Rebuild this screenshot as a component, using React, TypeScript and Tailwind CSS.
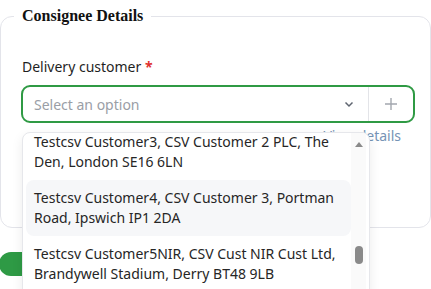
import React from "react";

const options = [
  ["Testcsv Customer3, CSV Customer 2 PLC, The", "Den, London SE16 6LN"],
  ["Testcsv Customer4, CSV Customer 3, Portman", "Road, Ipswich IP1 2DA"],
  ["Testcsv Customer5NIR, CSV Cust NIR Cust Ltd,", "Brandywell Stadium, Derry BT48 9LB"],
  ["Testcsv Customer6, CSV Customer 6 Ltd,", "High Street, Leeds LS1 1AA"],
];

export default function App() {
  return (
    <div className="relative w-[431px] h-[289px] overflow-hidden bg-white font-['Noto_Sans',sans-serif] text-[#222]">
      <fieldset className="w-[431px] h-[220px] mt-[8px] border border-[#e3e4ea] rounded-[12px] pl-[20px] pr-[15px] m-0">
        <legend className="-ml-[7px] px-[8px] font-['Liberation_Serif',serif] font-bold text-[16px] leading-[16px] text-[#111]">
          Consignee Details
        </legend>
        <div className="pt-[33px]">
          <div className="pl-[1px] text-[14px] leading-[20px] text-[#1f1f1f]">
            Delivery customer <span className="text-[#e0302e] font-bold">*</span>
          </div>
          <div className="mt-[8px] h-[38px] w-[394px] border-2 border-[#2f9a44] rounded-[9px] flex items-center">
            <div className="flex-1 pl-[11px] text-[14px] text-[#9a9ea6]">Select an option</div>
            <svg width="12" height="12" viewBox="0 0 12 12" className="mr-[13px]">
              <path d="M2.5 4.5 L6 8 L9.5 4.5" fill="none" stroke="#5f6570" strokeWidth="1.5" />
            </svg>
            <div className="w-px self-stretch bg-[#e3e4e8]" />
            <div className="w-[44px] flex items-center justify-center">
              <svg width="14" height="14" viewBox="0 0 14 14">
                <path d="M7 1 V13 M1 7 H13" stroke="#a3a7ae" strokeWidth="1.4" />
              </svg>
            </div>
          </div>
          <div className="flex justify-end pr-[14px] mt-[3px] text-[14px] leading-[20px] text-[#7693b5]">
            View details
          </div>
        </div>
      </fieldset>

      <div className="mt-[24px] -ml-[1px] w-[46px] h-[24px] rounded-full bg-[#2e9a45] flex items-center justify-end pr-[2px]">
        <div className="w-[20px] h-[20px] rounded-full bg-white" />
      </div>

      <div className="absolute left-[22px] top-[132px] w-[348px] h-[170px] bg-white border border-[#e6e7eb] rounded-[8px] shadow-[0_4px_12px_rgba(0,0,0,0.08)] flex overflow-hidden">
        <div className="flex-1 overflow-hidden">
          <div className="-mt-[9px] pl-[3px] flex flex-col">
            {options.map((o, i) => (
              <div
                key={i}
                className={
                  "px-[8px] py-[8px] rounded-[8px] text-[14px] leading-[20px] text-[#262626] " +
                  (i === 1 ? "bg-[#f6f7f9]" : "")
                }
              >
                <div>{o[0]}</div>
                <div>{o[1]}</div>
              </div>
            ))}
          </div>
        </div>
        <div className="w-[15px] mr-[3px] bg-[#fafafa] flex flex-col items-center">
          <svg width="8" height="6" viewBox="0 0 8 6" className="mt-[8px]">
            <path d="M0 6 L4 1 L8 6 Z" fill="#8a8a8a" />
          </svg>
          <div className="mt-[99px] w-[8px] h-[18px] rounded-full bg-[#8a8a8a]" />
        </div>
      </div>
    </div>
  );
}
